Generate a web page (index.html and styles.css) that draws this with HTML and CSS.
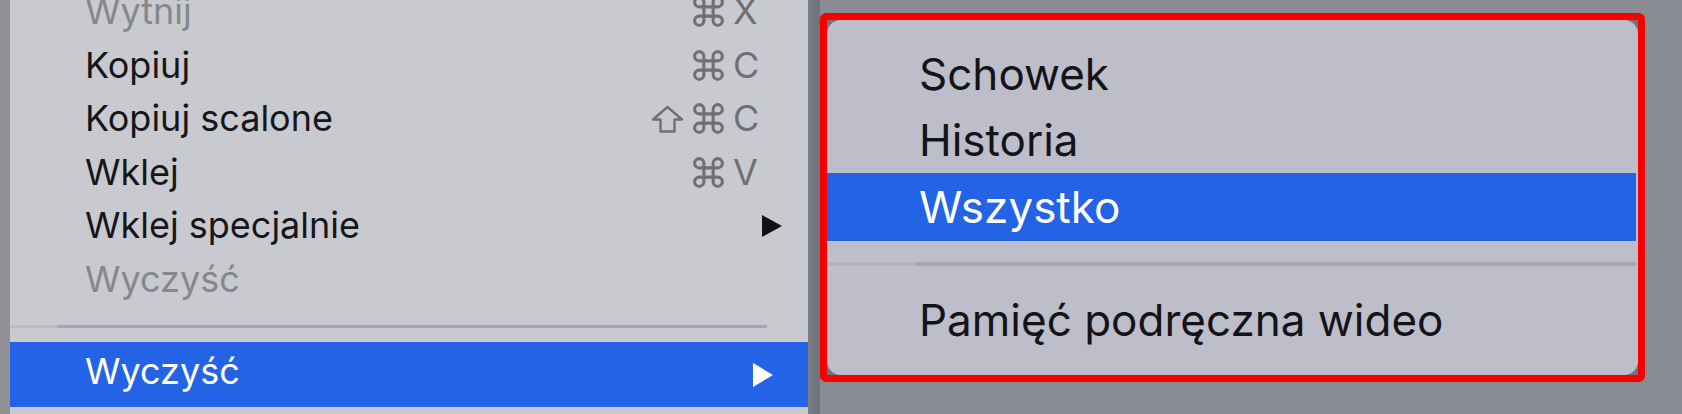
FILE: index.html
```html
<!DOCTYPE html>
<html lang="pl">
<head>
    <meta charset="utf-8">
    <link rel="stylesheet" href="styles.css">
    <title>Edycja - Wyczyść</title>
</head>
<body>
<div class="edge"></div>
<nav class="menu">
    <ul class="items">
        <li class="item off"><span>Wytnij</span><span class="keys"><svg class="cmd" viewBox="0 0 24 24"><path d="M15 6v12a3 3 0 1 0 3-3H6a3 3 0 1 0 3 3V6a3 3 0 1 0-3 3h12a3 3 0 1 0-3-3"/></svg><b>X</b></span></li>
        <li class="item"><span>Kopiuj</span><span class="keys"><svg class="cmd" viewBox="0 0 24 24"><path d="M15 6v12a3 3 0 1 0 3-3H6a3 3 0 1 0 3 3V6a3 3 0 1 0-3 3h12a3 3 0 1 0-3-3"/></svg><b>C</b></span></li>
        <li class="item"><span>Kopiuj scalone</span><span class="keys"><svg class="shift" viewBox="0 0 33 28"><path d="M16.5 2 L31 14.5 H23.5 V26.5 H9.5 V14.5 H2 Z"/></svg><svg class="cmd" viewBox="0 0 24 24"><path d="M15 6v12a3 3 0 1 0 3-3H6a3 3 0 1 0 3 3V6a3 3 0 1 0-3 3h12a3 3 0 1 0-3-3"/></svg><b>C</b></span></li>
        <li class="item"><span>Wklej</span><span class="keys"><svg class="cmd" viewBox="0 0 24 24"><path d="M15 6v12a3 3 0 1 0 3-3H6a3 3 0 1 0 3 3V6a3 3 0 1 0-3 3h12a3 3 0 1 0-3-3"/></svg><b>V</b></span></li>
        <li class="item sub"><span>Wklej specjalnie</span><i class="arrow"></i></li>
        <li class="item off"><span>Wyczyść</span></li>
        <li class="sep"></li>
        <li class="item sub active"><span>Wyczyść</span><i class="arrow"></i></li>
    </ul>
</nav>
<div class="gap"></div>
<div class="frame">
    <ul class="submenu">
        <li class="sitem">Schowek</li>
        <li class="sitem">Historia</li>
        <li class="sitem active">Wszystko</li>
        <li class="ssep"></li>
        <li class="sitem">Pamięć podręczna wideo</li>
    </ul>
</div>
</body>
</html>
```

FILE: styles.css
```css
/* @formatter:off */
html, body { margin: 0; padding: 0; }
body { width: 1682px; height: 414px; overflow: hidden; display: flex; align-items: flex-start; background: #8a8c93; font-family: Inter, "Noto Sans", sans-serif; }
ul { list-style: none; margin: 0; padding: 0; }

.edge { width: 10px; height: 100%; background: #8f9197; }
.gap { width: 12px; height: 100%; background: linear-gradient(to right, #7b7e86, #6e727a); }

.menu { width: 798px; height: 100%; background: #c9cad0; overflow: hidden; }
.items { margin-top: -15px; }
.item { display: flex; align-items: center; justify-content: space-between; height: 53.5px; line-height: 53.5px; padding: 0 51px 0 75px; font-size: 36px; color: #16161a; }
.item.off { color: #86878d; }
.item.sub { padding-right: 26px; }
.item.active { height: 58px; line-height: 58px; padding: 0 35px 7px 75px; background: #2463e6; color: #fff; }
.sep { height: 3px; margin: 19px 41px 14px 0; background: linear-gradient(to right, #bcbdc3 47px, #a5a6ad 47px); }

.keys { display: flex; align-items: center; gap: 10px; color: #6f7076; }
.keys b { font-weight: 400; width: 24px; text-align: right; }
.cmd { width: 37px; height: 37px; margin: 0 -4px; fill: none; stroke: #6f7076; stroke-width: 2; }
.shift { width: 33px; height: 28px; fill: none; stroke: #6f7076; stroke-width: 2.4; stroke-linejoin: round; }

.arrow { width: 0; height: 0; border-top: 11px solid transparent; border-bottom: 11px solid transparent; border-left: 20px solid #111; }
.active .arrow { border-top-width: 12.5px; border-bottom-width: 12.5px; border-left-color: #fff; margin-top: 7px; }

.frame { box-sizing: border-box; width: 825px; height: 369px; margin-top: 13px; border: 7px solid #f90000; border-radius: 6px; background: #6f737b; }
.submenu { height: 100%; box-sizing: border-box; padding-top: 21px; background: #bdbeca; border-radius: 14px; }
.sitem { height: 66px; line-height: 66px; padding-left: 92px; font-size: 44px; color: #141418; }
.sitem.active { height: 68px; line-height: 68px; margin-right: 2px; background: #2463e6; color: #fff; }
.ssep { height: 4px; margin: 21px 2px 21px 0; background: linear-gradient(to right, #b3b4c0 90px, #a6a7b2 90px); }
/* @formatter:on */
```
